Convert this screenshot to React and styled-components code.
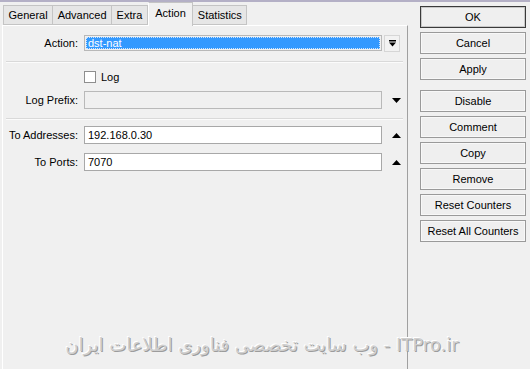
// Okno edycji reguły NAT (zakładka Action) w stylu Winbox

import React from "react";
import styled, { createGlobalStyle } from "styled-components";

const GlobalStyle = createGlobalStyle`
  body {
    margin: 0;
    background: #f0f0f0;
    font-family: "Liberation Sans", Arial, sans-serif;
    font-size: 11px;
    color: #000;
  }
`;

const Window = styled.div`
  position: relative;
  width: 530px;
  height: 369px;
  box-sizing: border-box;
  border-top: 2px solid #b4b0c6;
  background: #f0f0f0;
  display: flex;
  overflow: hidden;
`;

const Left = styled.div`
  width: 406px;
  padding-left: 2px;
  display: flex;
  flex-direction: column;
`;

const TabBar = styled.div`
  display: flex;
  align-items: flex-end;
  height: 23px;
  padding-left: 1px;
`;

const Tab = styled.div`
  box-sizing: border-box;
  height: ${(p) => (p.$active ? "24px" : "20px")};
  margin-bottom: ${(p) => (p.$active ? "-1px" : "0")};
  padding: 0 ${(p) => (p.$active ? "6.5px" : "4.5px")};
  display: flex;
  align-items: ${(p) => (p.$active ? "flex-start" : "center")};
  padding-top: ${(p) => (p.$active ? "4px" : "0")};
  font-size: 11px;
  background: ${(p) => (p.$active ? "#f0f0f0" : "#e6e6e6")};
  border: 1px solid #c4c4c4;
  border-bottom: ${(p) => (p.$active ? "none" : "1px solid #c4c4c4")};
  border-left-color: ${(p) => (p.$active ? "#fff" : "#c4c4c4")};
  margin-left: ${(p) => (p.$active ? "0" : "-1px")};
  position: relative;
  z-index: ${(p) => (p.$active ? 2 : 1)};
  &:first-child { margin-left: 0; }
`;

const Panel = styled.div`
  flex: 1;
  border-top: 1px solid #fff;
  border-left: 1px solid #fff;
  border-right: 1px solid #a0a0a0;
  padding: 7px 0 0 0;
`;

const Row = styled.div`
  display: grid;
  grid-template-columns: 75px 298px 18px;
  column-gap: 6px;
  align-items: center;
  height: 18px;
  margin-top: ${(p) => p.$top || 0}px;
`;

const Label = styled.span`
  text-align: right;
  font-size: 11px;
`;

const Field = styled.div`
  box-sizing: border-box;
  height: 18px;
  border: 1px solid ${(p) => (p.$disabled ? "#b9b9b9" : "#a8a8a8")};
  background: ${(p) => (p.$disabled ? "#f0f0f0" : "#fff")};
  padding: 0 3px;
  display: flex;
  align-items: center;
  font-size: 11px;
`;

const SelectField = styled.div`
  box-sizing: border-box;
  height: 16px;
  border: 1px solid #b8b8b8;
  padding: 1px;
  display: flex;
`;

const Selected = styled.div`
  flex: 1;
  background: #3399ff;
  color: #fff;
  outline: 1px dotted #cfe6ff;
  outline-offset: -1px;
  font-size: 11px;
  line-height: 12px;
  padding-left: 2px;
`;

const DropButton = styled.div`
  box-sizing: border-box;
  width: 16px;
  height: 17px;
  margin-left: -4px;
  border: 1px solid #d6d6d6;
  background: #f2f2f2;
  display: flex;
  align-items: center;
  justify-content: center;
`;

const Arrow = styled.div`
  display: flex;
  justify-content: center;
  margin-left: -2px;
`;

const Separator = styled.div`
  height: 1px;
  background: #d9d9d9;
  border-bottom: 1px solid #fbfbfb;
  margin: ${(p) => p.$top}px 4px 0 3px;
`;

const CheckRow = styled.label`
  display: flex;
  align-items: center;
  gap: 5px;
  margin: 7px 0 0 81px;
  font-size: 11px;
  height: 13px;
`;

const Checkbox = styled.span`
  box-sizing: border-box;
  width: 12px;
  height: 12px;
  border: 1px solid #8e8e8e;
  background: #fff;
`;

const Buttons = styled.div`
  display: flex;
  flex-direction: column;
  gap: 4px;
  padding: 4px 0 0 12px;
`;

const Button = styled.div`
  box-sizing: border-box;
  width: 106px;
  height: 22px;
  border: 1px solid ${(p) => (p.$default ? "#3a3a3a" : "#9a9a9a")};
  background: #efefef;
  box-shadow: inset 0 0 0 1px ${(p) => (p.$default ? "#c8c8c8" : "#f8f8f8")};
  display: flex;
  align-items: center;
  justify-content: center;
  font-size: 11px;
  margin-top: ${(p) => p.$gap || 0}px;
`;

const Watermark = styled.div`
  position: absolute;
  left: 62px;
  top: 332px;
  width: 400px;
  text-align: center;
  font-family: "DejaVu Sans", sans-serif;
  font-size: 18px;
  color: #cfcfcf;
  text-shadow: 1px 1px 0 #9c9c9c, -1px -1px 0 #ffffff;
  white-space: nowrap;
`;

const DropIcon = () => (
  <svg width="7" height="7" viewBox="0 0 7 7">
    <rect x="0" y="0" width="7" height="1.5" fill="#000" />
    <polygon points="0,2.5 7,2.5 3.5,6.5" fill="#000" />
  </svg>
);

const Triangle = ({ up }) => (
  <svg width="9" height="5" viewBox="0 0 9 5">
    <polygon points={up ? "0,5 9,5 4.5,0" : "0,0 9,0 4.5,5"} fill="#000" />
  </svg>
);

const tabs = ["General", "Advanced", "Extra", "Action", "Statistics"];
const buttons = [
  { label: "OK", def: true },
  { label: "Cancel" },
  { label: "Apply" },
  { label: "Disable", gap: 6 },
  { label: "Comment" },
  { label: "Copy" },
  { label: "Remove" },
  { label: "Reset Counters" },
  { label: "Reset All Counters" },
];

const App = () => {
  return (
    <>
      <GlobalStyle />
      <Window>
        <Left>
          <TabBar>
            {tabs.map((t) => (
              <Tab key={t} $active={t === "Action"}>
                {t}
              </Tab>
            ))}
          </TabBar>
          <Panel>
            <Row $top={1}>
              <Label>Action:</Label>
              <SelectField>
                <Selected>dst-nat</Selected>
              </SelectField>
              <DropButton>
                <DropIcon />
              </DropButton>
            </Row>
            <Separator $top={9} />
            <CheckRow>
              <Checkbox />
              Log
            </CheckRow>
            <Row $top={8}>
              <Label>Log Prefix:</Label>
              <Field $disabled />
              <Arrow>
                <Triangle />
              </Arrow>
            </Row>
            <Separator $top={9} />
            <Row $top={6}>
              <Label>To Addresses:</Label>
              <Field>192.168.0.30</Field>
              <Arrow>
                <Triangle up />
              </Arrow>
            </Row>
            <Row $top={9}>
              <Label>To Ports:</Label>
              <Field>7070</Field>
              <Arrow>
                <Triangle up />
              </Arrow>
            </Row>
          </Panel>
        </Left>
        <Buttons>
          {buttons.map((b) => (
            <Button key={b.label} $default={b.def} $gap={b.gap}>
              {b.label}
            </Button>
          ))}
        </Buttons>
        <Watermark dir="rtl">ITPro.ir - وب سایت تخصصی فناوری اطلاعات ایران</Watermark>
      </Window>
    </>
  );
};

export default App;
